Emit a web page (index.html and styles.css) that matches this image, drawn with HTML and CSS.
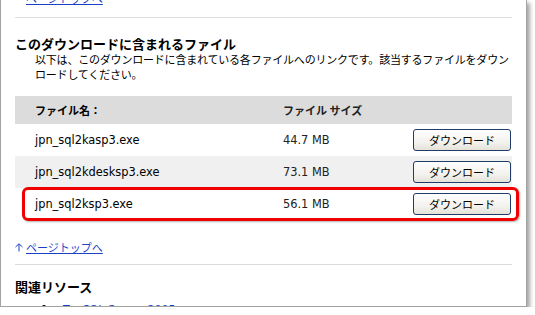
FILE: index.html
```html
<!DOCTYPE html>
<html lang="ja">
<head>
    <meta charset="UTF-8">
    <title>ダウンロード</title>
    <link rel="stylesheet" href="styles.css">
</head>
<body>
    <div class="frame">
        <div class="content">
            <div class="toplink first"><a href="#">ページトップへ</a></div>
            <div class="rule"></div>

            <h3 class="heading files-heading">このダウンロードに含まれるファイル</h3>
            <p class="desc">以下は、このダウンロードに含まれている各ファイルへのリンクです。該当するファイルをダウン<br>ロードしてください。</p>

            <div class="files">
                <div class="row head">
                    <div class="cell name">ファイル名：</div>
                    <div class="cell size">ファイル サイズ</div>
                    <div class="cell"></div>
                </div>
                <div class="row">
                    <div class="cell name">jpn_sql2kasp3.exe</div>
                    <div class="cell size">44.7 MB</div>
                    <div class="cell btn-cell"><button class="dl-button">ダウンロード</button></div>
                </div>
                <div class="row alt">
                    <div class="cell name">jpn_sql2kdesksp3.exe</div>
                    <div class="cell size">73.1 MB</div>
                    <div class="cell btn-cell"><button class="dl-button">ダウンロード</button></div>
                </div>
                <div class="row marked">
                    <div class="cell name">jpn_sql2ksp3.exe</div>
                    <div class="cell size">56.1 MB</div>
                    <div class="cell btn-cell"><button class="dl-button">ダウンロード</button></div>
                    <div class="highlight"></div>
                </div>
            </div>

            <div class="toplink">
                <svg class="up-arrow" width="8" height="9" viewBox="0 0 8 9">
                    <path d="M0.5 4 L4 0.8 L7.5 4 M4 1 V8.5" fill="none" stroke="#1a3fc8" stroke-width="1"/>
                </svg>
                <a href="#">ページトップへ</a>
            </div>
            <div class="rule second"></div>

            <h3 class="heading related-heading">関連リソース</h3>
            <ol class="related">
                <li><a href="#">Try SQL Server 2005</a></li>
            </ol>
        </div>
    </div>
</body>
</html>
```

FILE: styles.css
```css
body {
    margin: 0;
    background-color: #fff;
    font-family: "DejaVu Sans", "Noto Sans CJK JP", sans-serif;
    font-size: 11px;
    color: #000;
}

a {
    color: #1a3fc8;
}

.frame {
    width: 525px;
    height: 306px;
    border: 1px solid #a3a3a3;
    border-top: none;
    overflow: hidden;
    box-shadow: 3px 3px 4px rgba(0, 0, 0, 0.35);
}

.content {
    padding: 0 14px;
}

.toplink {
    display: flex;
    align-items: center;
    gap: 3px;
    height: 14px;
    line-height: 14px;
    margin-top: 20px;
    font-family: "Noto Sans CJK JP", sans-serif;
}

.toplink.first {
    margin-top: -9px;
    padding-left: 11px;
}

.up-arrow {
    display: block;
}

.rule {
    border-top: 1px solid #dcdcdc;
    margin-top: 12px;
}

.rule.second {
    margin-top: 10px;
}

.heading {
    margin: 18px 0 0;
    font-family: "Noto Sans CJK JP", sans-serif;
    font-size: 13px;
    font-weight: bold;
    line-height: 16px;
}

.related-heading {
    margin-top: 14px;
}

.desc {
    margin: 0;
    padding-left: 20px;
    font-family: "Noto Sans CJK JP", sans-serif;
    font-size: 11px;
    line-height: 15px;
    letter-spacing: -0.2px;
}

.files {
    margin-top: 14px;
}

.row {
    position: relative;
    display: grid;
    grid-template-columns: 268px 1fr 100px;
    align-items: center;
    height: 32px;
    font-size: 11.4px;
}

.row.head {
    height: 28px;
    background-color: #dcdcdc;
    font-family: "Noto Sans CJK JP", sans-serif;
    font-size: 11px;
    font-weight: bold;
}

.row.alt {
    background-color: #f0f0f0;
}

.cell.name {
    padding-left: 20px;
}

.cell.size {
    color: #222;
}

.btn-cell {
    display: flex;
    justify-content: flex-end;
    padding-right: 1px;
}

.dl-button {
    width: 98px;
    height: 22px;
    padding: 0;
    border: 1px solid #1f3d66;
    border-radius: 3px;
    background: linear-gradient(#ffffff, #f3f2ee 60%, #e4e2d8);
    font-family: "Noto Sans CJK JP", sans-serif;
    font-size: 11px;
    color: #000;
    cursor: pointer;
}

.highlight {
    position: absolute;
    left: 7px;
    top: -1px;
    width: 491px;
    height: 28px;
    border: 3px solid #f00000;
    border-radius: 6px;
    box-shadow: 1px 1px 2px rgba(0, 0, 0, 0.3);
    pointer-events: none;
}

.related {
    margin: 8px 0 0;
    padding-left: 40px;
    line-height: 14px;
}

.related li {
    padding-left: 8px;
}
```
